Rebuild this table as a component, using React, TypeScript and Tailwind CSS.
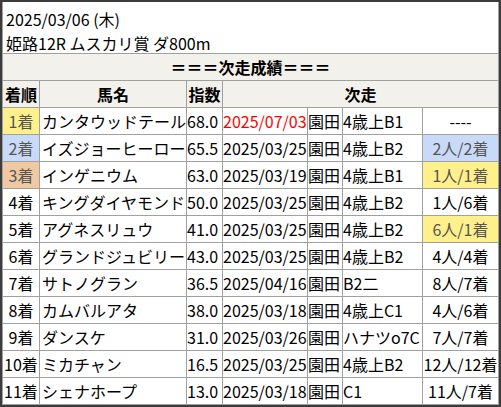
import React from "react";

type Row = {
  rank: string;
  name: string;
  idx: string;
  date: string;
  red?: boolean;
  track: string;
  cls: string;
  res: string;
  rankBg?: string;
  resBg?: string;
};

const rows: Row[] = [
  { rank: "1着", name: "カンタウッドテール", idx: "68.0", date: "2025/07/03", red: true, track: "園田", cls: "4歳上B1", res: "----", rankBg: "bg-[#fff08c]" },
  { rank: "2着", name: "イズジョーヒーロー", idx: "65.5", date: "2025/03/25", track: "園田", cls: "4歳上B2", res: "2人/2着", rankBg: "bg-[#c9daf8]", resBg: "bg-[#c9daf8]" },
  { rank: "3着", name: "インゲニウム", idx: "63.0", date: "2025/03/19", track: "園田", cls: "4歳上B1", res: "1人/1着", rankBg: "bg-[#f0c9a2]", resBg: "bg-[#fff08c]" },
  { rank: "4着", name: "キングダイヤモンド", idx: "50.0", date: "2025/03/25", track: "園田", cls: "4歳上B2", res: "1人/6着" },
  { rank: "5着", name: "アグネスリュウ", idx: "41.0", date: "2025/03/25", track: "園田", cls: "4歳上B2", res: "6人/1着", resBg: "bg-[#fff08c]" },
  { rank: "6着", name: "グランドジュビリー", idx: "43.0", date: "2025/03/25", track: "園田", cls: "4歳上B2", res: "4人/4着" },
  { rank: "7着", name: "サトノグラン", idx: "36.5", date: "2025/04/16", track: "園田", cls: "B2二", res: "8人/7着" },
  { rank: "8着", name: "カムバルアタ", idx: "38.0", date: "2025/03/18", track: "園田", cls: "4歳上C1", res: "4人/6着" },
  { rank: "9着", name: "ダンスケ", idx: "31.0", date: "2025/03/26", track: "園田", cls: "ハナツo7C", res: "7人/7着" },
  { rank: "10着", name: "ミカチャン", idx: "16.5", date: "2025/03/25", track: "園田", cls: "4歳上B2", res: "12人/12着" },
  { rank: "11着", name: "シェナホープ", idx: "13.0", date: "2025/03/18", track: "園田", cls: "C1", res: "11人/7着" },
];

const cell = "h-[27px] border-r border-b border-[#a0a0a0] flex items-center overflow-hidden whitespace-nowrap";

export default function App() {
  return (
    <div
      className="w-[501px] h-[407px] border-2 border-[#3c3c3c] bg-white text-black text-[16px] leading-[22px] overflow-hidden"
      style={{ fontFamily: '"Noto Sans CJK JP", "Noto Sans", sans-serif' }}
    >
      <div className="w-[497px] h-[403px] border-l border-[#a0a0a0]">
        <div className="h-[52px] border-r border-b border-[#a0a0a0] bg-white pl-[3px] pt-[5px] leading-[24px]">
          <div>2025/03/06 (木)</div>
          <div>姫路12R ムスカリ賞 ダ800m</div>
        </div>
        <div className="grid grid-cols-[37px_147px_36px_85px_35px_80px_76px] bg-white">
          <div className={`${cell} col-span-7 justify-center font-bold bg-[#f2f1ec]`}>＝＝＝次走成績＝＝＝</div>
          <div className={`${cell} justify-center font-bold bg-[#f2f1ec]`}>着順</div>
          <div className={`${cell} justify-center font-bold bg-[#f2f1ec]`}>馬名</div>
          <div className={`${cell} justify-center font-bold bg-[#f2f1ec]`}>指数</div>
          <div className={`${cell} col-span-4 justify-center font-bold bg-[#f2f1ec]`}>次走</div>
          {rows.map((r, i) => (
            <React.Fragment key={i}>
              <div className={`${cell} justify-center ${r.rankBg ? r.rankBg + " text-[#555]" : ""}`}>{r.rank}</div>
              <div className={`${cell} pl-[2px]`}>{r.name}</div>
              <div className={`${cell}`}>{r.idx}</div>
              <div className={`${cell} ${r.red ? "text-[#ff0000]" : ""}`}>{r.date}</div>
              <div className={`${cell}`}>{r.track}</div>
              <div className={`${cell}`}>{r.cls}</div>
              <div className={`${cell} justify-center ${r.resBg ? r.resBg + " text-[#555]" : ""}`}>{r.res}</div>
            </React.Fragment>
          ))}
        </div>
      </div>
    </div>
  );
}
